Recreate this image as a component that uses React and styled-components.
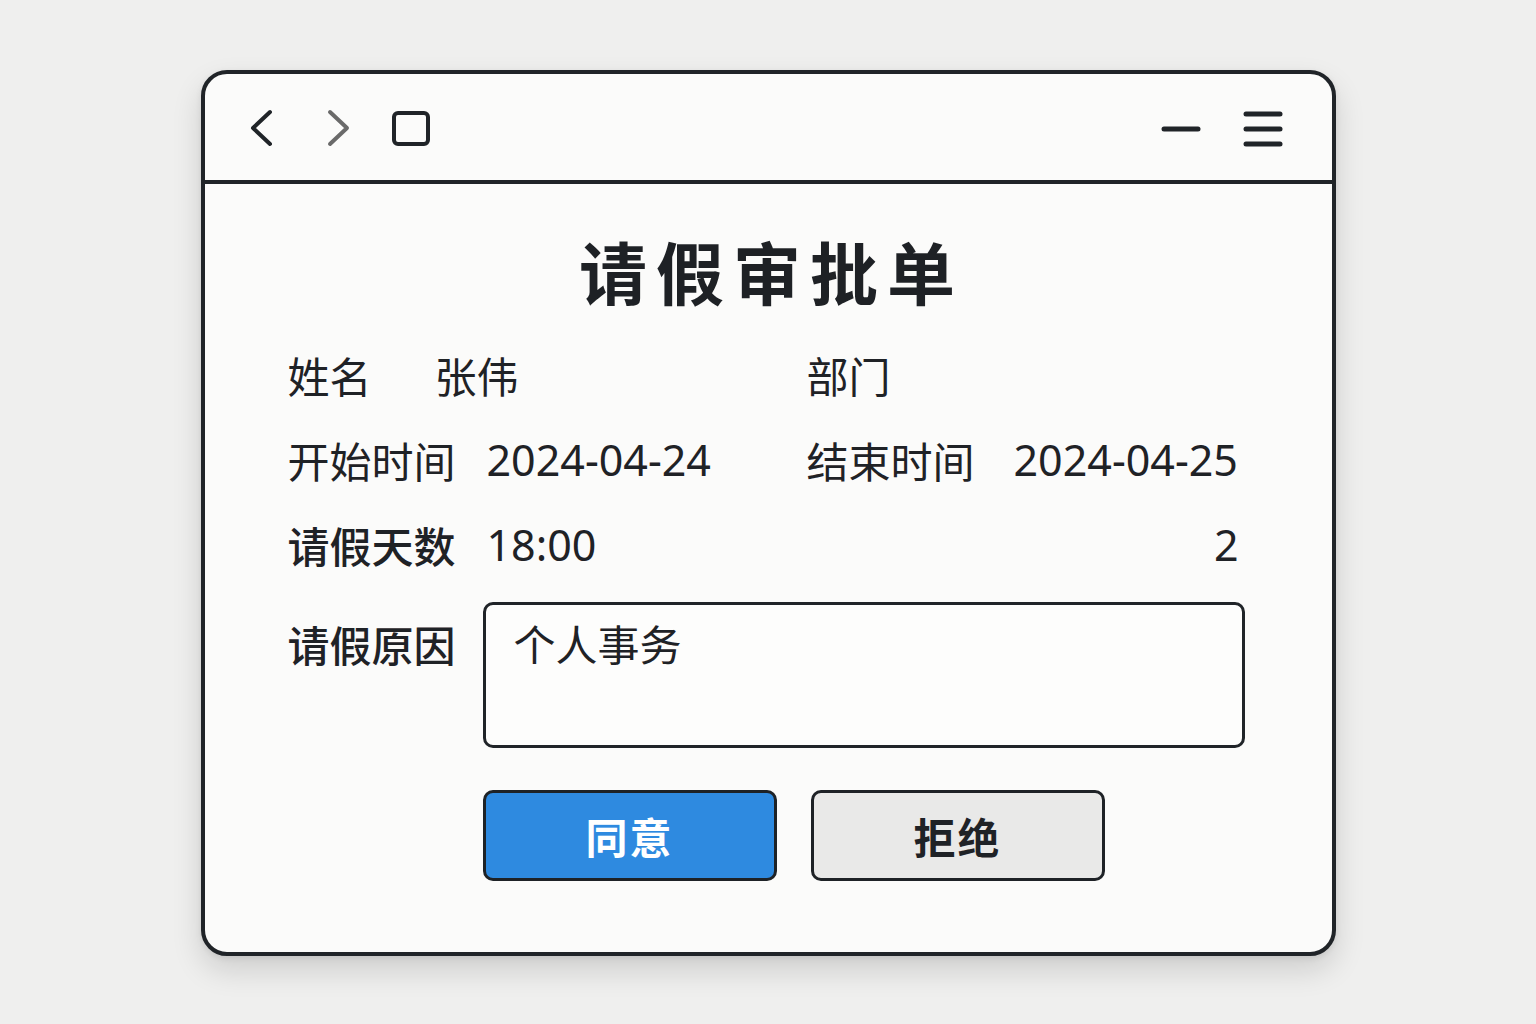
import React from "react";
import styled, { createGlobalStyle } from "styled-components";

const GlobalStyle = createGlobalStyle`
  html, body {
    margin: 0;
    padding: 0;
    background: #efefee;
  }
  body {
    font-family: "Noto Sans CJK SC", "Noto Sans", sans-serif;
    color: #1f2226;
  }
`;

const Page = styled.div`
  width: 1536px;
  height: 1024px;
  display: flex;
  justify-content: center;
  padding-top: 70px;
  box-sizing: border-box;
`;

const Window = styled.div`
  width: 1135px;
  height: 886px;
  box-sizing: border-box;
  border: 4px solid #202428;
  border-radius: 26px;
  background: #fbfbfa;
  box-shadow: 0 14px 30px rgba(0, 0, 0, 0.14), 0 2px 6px rgba(0, 0, 0, 0.08);
  display: flex;
  flex-direction: column;
  overflow: hidden;
`;

const Toolbar = styled.div`
  height: 110px;
  flex-shrink: 0;
  box-sizing: border-box;
  border-bottom: 4px solid #202428;
  display: flex;
  align-items: center;
  justify-content: space-between;
  padding: 4px 47px 0 42px;
`;

const IconGroup = styled.div`
  display: flex;
  align-items: center;
  gap: ${(p) => p.$gap || 40}px;
`;

const Body = styled.div`
  flex: 1;
  display: flex;
  flex-direction: column;
  padding: 48px 87px 0 83px;
`;

const Title = styled.h1`
  margin: 0 0 39px;
  text-align: center;
  font-size: 68px;
  line-height: 78px;
  font-weight: 700;
  letter-spacing: 9px;
  padding-left: 11px;
  color: #1e2125;
`;

const Row = styled.div`
  display: flex;
  align-items: ${(p) => (p.$top ? "flex-start" : "center")};
  margin-bottom: ${(p) => p.$mb || 0}px;
`;

const Half = styled.div`
  display: flex;
  align-items: center;
  width: ${(p) => p.$w}px;
`;

const Label = styled.span`
  display: inline-block;
  width: ${(p) => p.$w}px;
  flex-shrink: 0;
  font-size: 42px;
  line-height: 52px;
  font-weight: ${(p) => (p.$bold ? 500 : 400)};
  margin-top: ${(p) => p.$mt || 0}px;
`;

const Value = styled.span`
  font-family: "Noto Sans", "Noto Sans CJK SC", sans-serif;
  font-size: 43px;
  line-height: 52px;
  font-weight: 400;
  margin-left: ${(p) => (p.$push ? "auto" : "0")};
  padding-right: ${(p) => p.$pr || 0}px;
`;

const NameValue = styled.span`
  font-size: 42px;
  line-height: 52px;
  font-weight: 400;
`;

const TextBox = styled.div`
  width: 762px;
  height: 146px;
  box-sizing: border-box;
  border: 3px solid #202428;
  border-radius: 10px;
  padding: 12px 28px;
  font-size: 42px;
  line-height: 52px;
  background: #fdfdfc;
`;

const Actions = styled.div`
  display: flex;
  gap: 34px;
  padding-left: 195px;
  margin-top: 42px;
`;

const Button = styled.button`
  width: 294px;
  height: 91px;
  box-sizing: border-box;
  border: 3px solid #1e2226;
  border-radius: 10px;
  background: ${(p) => (p.$primary ? "#2e8ae0" : "#e9e9e8")};
  color: ${(p) => (p.$primary ? "#ffffff" : "#1f2226")};
  font-family: "Noto Sans CJK SC", "Noto Sans", sans-serif;
  font-size: 42px;
  font-weight: 700;
  letter-spacing: 2px;
  cursor: pointer;
  display: flex;
  align-items: center;
  justify-content: center;
`;

const ChevronLeft = ({ color }) => (
  <svg width="28" height="42" viewBox="0 0 28 42">
    <path d="M23 4 L6 20 L23 36" fill="none" stroke={color} strokeWidth="4" strokeLinecap="round" strokeLinejoin="round" />
  </svg>
);

const ChevronRight = ({ color }) => (
  <svg width="28" height="42" viewBox="0 0 28 42">
    <path d="M5 4 L22 20 L5 36" fill="none" stroke={color} strokeWidth="4" strokeLinecap="round" strokeLinejoin="round" />
  </svg>
);

const SquareIcon = () => (
  <svg width="40" height="38" viewBox="0 0 40 38">
    <rect x="3" y="3" width="34" height="31" rx="4" fill="none" stroke="#202428" strokeWidth="4" />
  </svg>
);

const MinusIcon = () => (
  <svg width="44" height="10" viewBox="0 0 44 10">
    <line x1="5" y1="5" x2="39" y2="5" stroke="#202428" strokeWidth="5" strokeLinecap="round" />
  </svg>
);

const MenuIcon = () => (
  <svg width="44" height="40" viewBox="0 0 44 40">
    <line x1="5" y1="5" x2="39" y2="5" stroke="#202428" strokeWidth="5" strokeLinecap="round" />
    <line x1="5" y1="20" x2="39" y2="20" stroke="#202428" strokeWidth="5" strokeLinecap="round" />
    <line x1="5" y1="35" x2="39" y2="35" stroke="#202428" strokeWidth="5" strokeLinecap="round" />
  </svg>
);

export default function App() {
  return (
    <>
      <GlobalStyle />
      <Page>
        <Window>
          <Toolbar>
            <IconGroup $gap={50}>
              <ChevronLeft color="#202428" />
              <IconGroup $gap={38}>
                <ChevronRight color="#6a6a6a" />
                <SquareIcon />
              </IconGroup>
            </IconGroup>
            <IconGroup $gap={38}>
              <MinusIcon />
              <MenuIcon />
            </IconGroup>
          </Toolbar>
          <Body>
            <Title>请假审批单</Title>
            <Row $mb={33}>
              <Half $w={519}>
                <Label $w={147}>姓名</Label>
                <NameValue>张伟</NameValue>
              </Half>
              <Half>
                <Label $w={207}>部门</Label>
              </Half>
            </Row>
            <Row $mb={33}>
              <Half $w={519}>
                <Label $w={199}>开始时间</Label>
                <Value>2024-04-24</Value>
              </Half>
              <Half>
                <Label $w={207}>结束时间</Label>
                <Value>2024-04-25</Value>
              </Half>
            </Row>
            <Row $mb={31}>
              <Label $w={199} $bold>请假天数</Label>
              <Value>18:00</Value>
              <Value $push $pr={6}>2</Value>
            </Row>
            <Row $top>
              <Label $w={195} $bold $mt={16}>请假原因</Label>
              <TextBox>个人事务</TextBox>
            </Row>
            <Actions>
              <Button $primary>同意</Button>
              <Button>拒绝</Button>
            </Actions>
          </Body>
        </Window>
      </Page>
    </>
  );
}
